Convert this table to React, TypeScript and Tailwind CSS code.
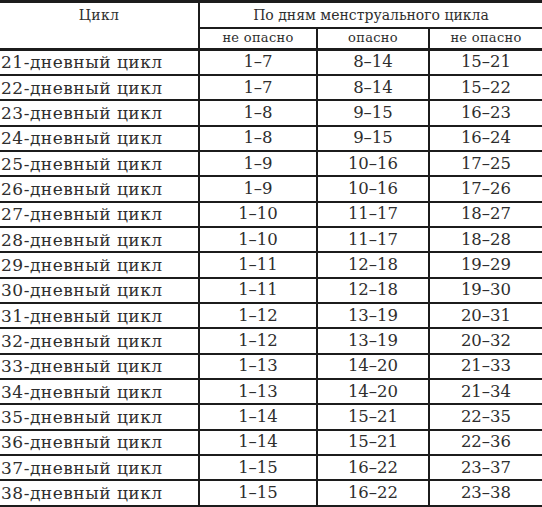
const rows: [number, string, string, string][] = [
  [21, "1–7", "8–14", "15–21"],
  [22, "1–7", "8–14", "15–22"],
  [23, "1–8", "9–15", "16–23"],
  [24, "1–8", "9–15", "16–24"],
  [25, "1–9", "10–16", "17–25"],
  [26, "1–9", "10–16", "17–26"],
  [27, "1–10", "11–17", "18–27"],
  [28, "1–10", "11–17", "18–28"],
  [29, "1–11", "12–18", "19–29"],
  [30, "1–11", "12–18", "19–30"],
  [31, "1–12", "13–19", "20–31"],
  [32, "1–12", "13–19", "20–32"],
  [33, "1–13", "14–20", "21–33"],
  [34, "1–13", "14–20", "21–34"],
  [35, "1–14", "15–21", "22–35"],
  [36, "1–14", "15–21", "22–36"],
  [37, "1–15", "16–22", "23–37"],
  [38, "1–15", "16–22", "23–38"],
];

export default function App() {
  return (
    <div className="w-[542px] bg-white font-serif text-[#2e2e2e]">
      <table className="w-[542px] table-fixed border-collapse font-[family-name:DejaVu_Serif,serif]">
        <colgroup>
          <col className="w-[199px]" />
          <col className="w-[118px]" />
          <col className="w-[112px]" />
          <col className="w-[113px]" />
        </colgroup>
        <thead>
          <tr className="h-[26px] border-t-[3px] border-[#1c1c1c]">
            <td
              rowSpan={2}
              className="border-r-2 border-b-[3px] border-[#1c1c1c] pt-[2px] text-center align-top text-[14px] leading-[20px] tracking-[0.3px]"
            >
              Цикл
            </td>
            <td
              colSpan={3}
              className="border-b-2 border-[#1c1c1c] text-center text-[14px] leading-[20px]"
            >
              По дням менструального цикла
            </td>
          </tr>
          <tr className="h-[22px] border-b-[3px] border-[#1c1c1c]">
            <td className="border-r-2 border-[#1c1c1c] text-center text-[13px] leading-[18px] tracking-[0.3px]">
              не опасно
            </td>
            <td className="border-r-2 border-[#1c1c1c] text-center text-[13px] leading-[18px] tracking-[0.3px]">
              опасно
            </td>
            <td className="text-center text-[13px] leading-[18px] tracking-[0.3px]">
              не опасно
            </td>
          </tr>
        </thead>
        <tbody>
          {rows.map(([day, a, b, c]) => (
            <tr key={day} className="h-[25.35px] border-b-2 border-[#1c1c1c]">
              <td className="border-r-2 border-[#1c1c1c] pl-[1px] text-[17px] leading-[20px] tracking-[0.5px]">
                {day}-дневный цикл
              </td>
              <td className="border-r-2 border-[#1c1c1c] text-center text-[16.5px] leading-[20px]">
                {a}
              </td>
              <td className="border-r-2 border-[#1c1c1c] text-center text-[16.5px] leading-[20px]">
                {b}
              </td>
              <td className="text-center text-[16.5px] leading-[20px]">{c}</td>
            </tr>
          ))}
        </tbody>
      </table>
    </div>
  );
}
